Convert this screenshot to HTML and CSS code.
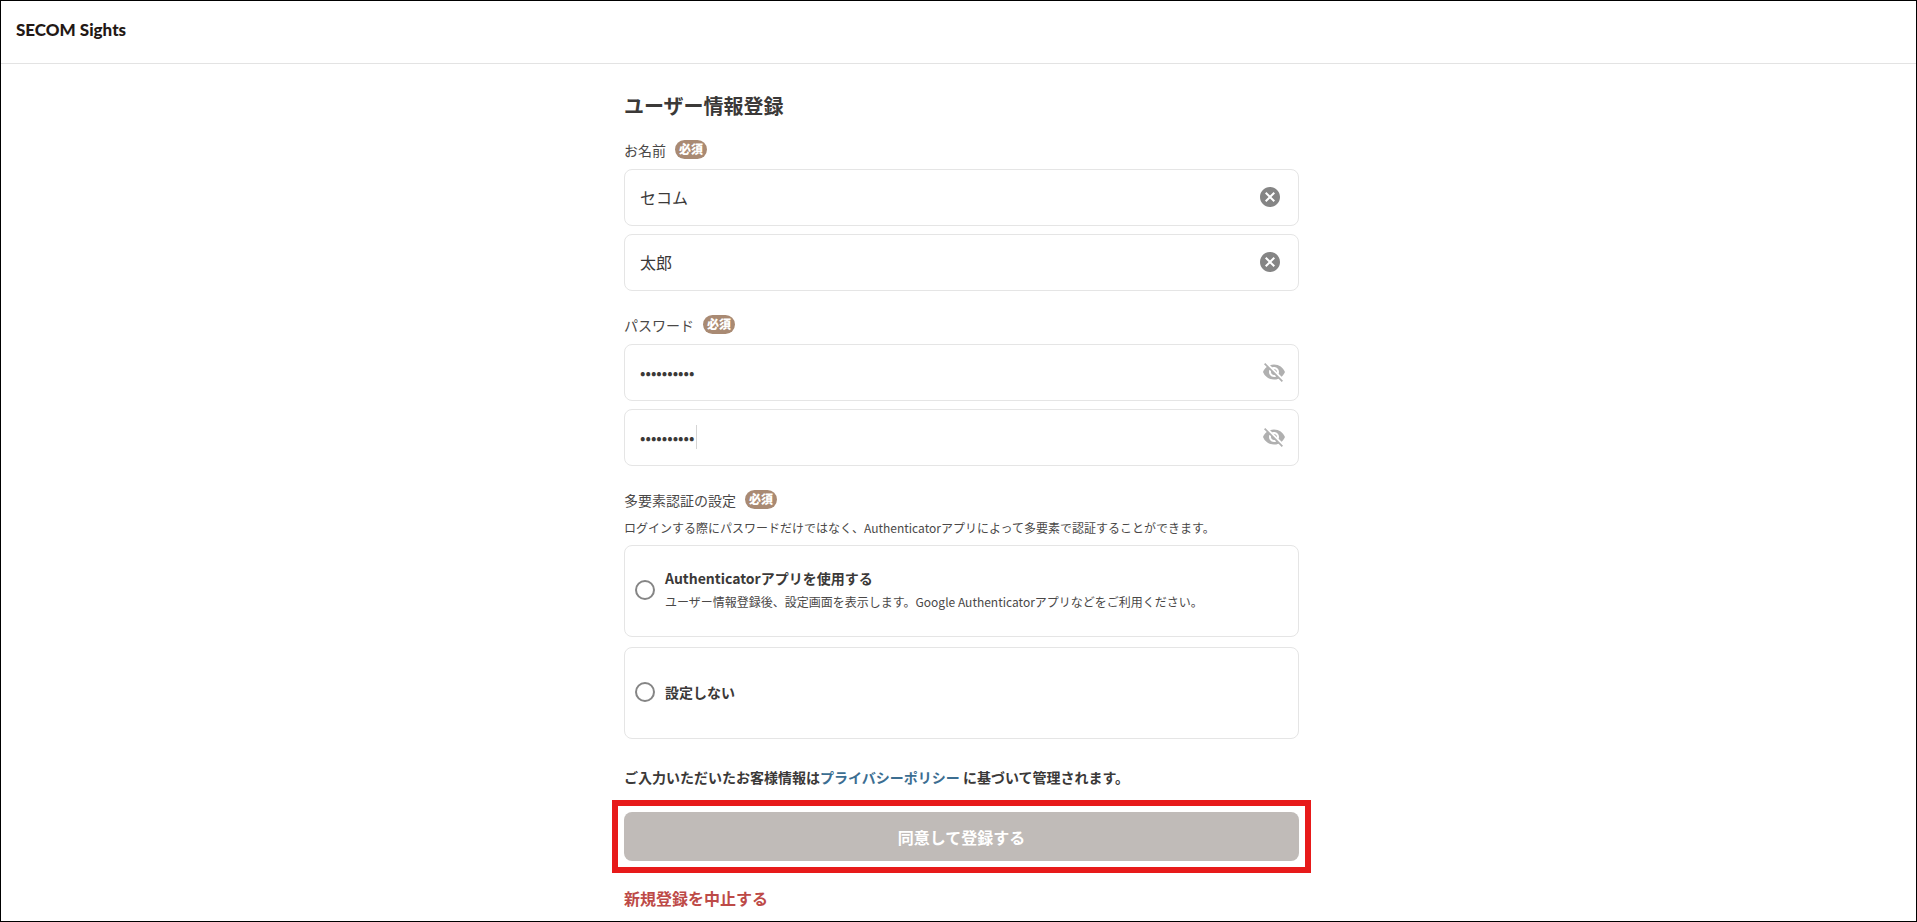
FILE: index.html
```html
<!DOCTYPE html>
<html lang="ja">
<head>
    <meta charset="UTF-8">
    <meta name="viewport" content="width=device-width, initial-scale=1.0">
    <title>ユーザー情報登録</title>
    <link rel="stylesheet" href="styles.css">
</head>
<body>
    <header class="header">
        <a class="logo" href="#">SECOM Sights</a>
    </header>

    <main class="container">
        <h1>ユーザー情報登録</h1>
        <form>
            <div class="group">
                <div class="label-row">
                    <label for="lastName">お名前</label>
                    <span class="badge">必須</span>
                </div>
                <div class="field">
                    <input type="text" id="lastName" value="セコム">
                    <button type="button" class="icon-button clear" aria-label="クリア">
                        <svg viewBox="0 0 24 24"><path d="M12 2C6.47 2 2 6.47 2 12s4.47 10 10 10 10-4.47 10-10S17.53 2 12 2zm5 13.59L15.59 17 12 13.41 8.41 17 7 15.59 10.59 12 7 8.41 8.41 7 12 10.59 15.59 7 17 8.41 13.41 12 17 15.59z"/></svg>
                    </button>
                </div>
                <div class="field">
                    <input type="text" aria-label="名" value="太郎">
                    <button type="button" class="icon-button clear" aria-label="クリア">
                        <svg viewBox="0 0 24 24"><path d="M12 2C6.47 2 2 6.47 2 12s4.47 10 10 10 10-4.47 10-10S17.53 2 12 2zm5 13.59L15.59 17 12 13.41 8.41 17 7 15.59 10.59 12 7 8.41 8.41 7 12 10.59 15.59 7 17 8.41 13.41 12 17 15.59z"/></svg>
                    </button>
                </div>
            </div>

            <div class="group">
                <div class="label-row">
                    <label for="password">パスワード</label>
                    <span class="badge">必須</span>
                </div>
                <div class="field">
                    <input type="password" id="password" value="password12">
                    <button type="button" class="icon-button" aria-label="パスワードを表示">
                        <svg viewBox="0 0 24 24"><path d="M12 7c2.76 0 5 2.24 5 5 0 .65-.13 1.26-.36 1.83l2.92 2.92c1.51-1.26 2.7-2.89 3.43-4.75-1.73-4.39-6-7.5-11-7.5-1.4 0-2.74.25-3.98.7l2.16 2.16C10.74 7.13 11.35 7 12 7zM2 4.27l2.28 2.28.46.46C3.08 8.3 1.78 10.02 1 12c1.73 4.39 6 7.5 11 7.5 1.55 0 3.03-.3 4.38-.84l.42.42L19.73 22 21 20.73 3.27 3 2 4.27zM7.53 9.8l1.55 1.55c-.05.21-.08.43-.08.65 0 1.66 1.34 3 3 3 .22 0 .44-.03.65-.08l1.55 1.55c-.67.33-1.41.53-2.2.53-2.76 0-5-2.24-5-5 0-.79.2-1.53.53-2.2zm4.31-.78l3.15 3.15.02-.16c0-1.66-1.34-3-3-3l-.17.01z"/></svg>
                    </button>
                </div>
                <div class="field">
                    <input type="password" class="confirm" aria-label="パスワード(確認)" value="password12">
                    <button type="button" class="icon-button" aria-label="パスワードを表示">
                        <svg viewBox="0 0 24 24"><path d="M12 7c2.76 0 5 2.24 5 5 0 .65-.13 1.26-.36 1.83l2.92 2.92c1.51-1.26 2.7-2.89 3.43-4.75-1.73-4.39-6-7.5-11-7.5-1.4 0-2.74.25-3.98.7l2.16 2.16C10.74 7.13 11.35 7 12 7zM2 4.27l2.28 2.28.46.46C3.08 8.3 1.78 10.02 1 12c1.73 4.39 6 7.5 11 7.5 1.55 0 3.03-.3 4.38-.84l.42.42L19.73 22 21 20.73 3.27 3 2 4.27zM7.53 9.8l1.55 1.55c-.05.21-.08.43-.08.65 0 1.66 1.34 3 3 3 .22 0 .44-.03.65-.08l1.55 1.55c-.67.33-1.41.53-2.2.53-2.76 0-5-2.24-5-5 0-.79.2-1.53.53-2.2zm4.31-.78l3.15 3.15.02-.16c0-1.66-1.34-3-3-3l-.17.01z"/></svg>
                    </button>
                </div>
            </div>

            <div class="group" role="radiogroup" aria-labelledby="mfaLabel">
                <div class="label-row">
                    <span id="mfaLabel">多要素認証の設定</span>
                    <span class="badge">必須</span>
                </div>
                <p class="note">ログインする際にパスワードだけではなく、Authenticatorアプリによって多要素で認証することができます。</p>
                <label class="option">
                    <input type="radio" name="mfa" value="app">
                    <span class="option-text">
                        <strong>Authenticatorアプリを使用する</strong>
                        <small>ユーザー情報登録後、設定画面を表示します。Google Authenticatorアプリなどをご利用ください。</small>
                    </span>
                </label>
                <label class="option">
                    <input type="radio" name="mfa" value="none">
                    <span class="option-text">
                        <strong>設定しない</strong>
                    </span>
                </label>
            </div>

            <p class="policy">ご入力いただいたお客様情報は<a href="#">プライバシーポリシー</a> に基づいて管理されます。</p>
            <div class="submit-frame">
                <button type="submit" class="submit" disabled>同意して登録する</button>
            </div>
            <a class="cancel" href="#">新規登録を中止する</a>
        </form>
    </main>
</body>
</html>
```
FILE: styles.css
```css
* {
    box-sizing: border-box;
}
body {
    margin: 0;
    min-height: 100vh;
    border: 1px solid #000;
    background: #fff;
    color: #3b3938;
    font-family: "Noto Sans CJK JP", sans-serif;
    font-size: 14px;
    line-height: 20px;
}
a {
    text-decoration: none;
}
.header {
    display: flex;
    align-items: center;
    height: 63px;
    padding: 0 15px 4px;
    border-bottom: 1px solid #e3e3e3;
}
.logo {
    color: #231815;
    font-family: Lato, sans-serif;
    font-size: 17px;
    font-weight: 900;
}
.container {
    width: 100%;
    max-width: 681px;
    margin: 0 auto;
    padding: 26px 0 0 6px;
}
h1 {
    margin: 0 0 18px;
    font-size: 20px;
    font-weight: 700;
    line-height: 32px;
}
.group {
    display: flex;
    flex-direction: column;
    gap: 8px;
    margin-bottom: 24px;
}
.label-row {
    display: flex;
    align-items: center;
    gap: 9px;
    height: 19px;
    margin-bottom: 2px;
    color: #4a4847;
    line-height: 18px;
}
.badge {
    height: 19px;
    padding: 0 4px;
    border-radius: 10px;
    background: #a98a73;
    color: #fff;
    font-size: 12px;
    font-weight: 900;
}
.field {
    display: flex;
    align-items: center;
    height: 57px;
    padding: 0 12px 2px 15px;
    border: 1px solid #e5e5e5;
    border-radius: 8px;
}
.field input {
    flex: 1;
    min-width: 0;
    height: 24px;
    padding: 0;
    border: none;
    outline: none;
    background: none;
    color: #3b3938;
    font-family: inherit;
    font-size: 16px;
}
/* カーソル */
.field .confirm {
    background: linear-gradient(#d5d5d5, #d5d5d5) 56px 0 / 1px 24px no-repeat;
}
.icon-button {
    display: flex;
    padding: 0;
    border: none;
    background: none;
    color: #b0b0b0;
    cursor: pointer;
}
.icon-button svg {
    width: 24px;
    height: 24px;
    fill: currentColor;
}
.clear {
    margin-right: 4px;
    color: #858585;
}
.note {
    margin: 0;
    color: #4a4847;
    font-size: 12px;
    line-height: 18px;
}
.option {
    display: flex;
    align-items: center;
    gap: 10px;
    height: 92px;
    padding: 0 10px 2px;
    border: 1px solid #e5e5e5;
    border-radius: 8px;
}
.option + .option {
    margin-top: 2px;
}
.option input {
    appearance: none;
    width: 20px;
    height: 20px;
    margin: 0;
    border: 2px solid #858585;
    border-radius: 50%;
}
.option input:checked {
    background: #858585;
}
.option-text {
    display: flex;
    flex-direction: column;
    gap: 4px;
}
.option small {
    color: #4a4847;
    font-size: 12px;
}
.policy {
    margin: 28px 0 13px;
    font-weight: 700;
}
.policy a {
    color: #3c6e91;
}
.submit-frame {
    margin: 0 -12px 15px;
    padding: 6px;
    border: 6px solid #e71a1a;
}
.submit {
    display: block;
    width: 100%;
    height: 49px;
    border: none;
    border-radius: 8px;
    background: #c0bbb8;
    color: #fff;
    font-family: inherit;
    font-size: 16px;
    font-weight: 700;
}
.cancel {
    color: #bd4a47;
    font-size: 16px;
    font-weight: 700;
}
```
